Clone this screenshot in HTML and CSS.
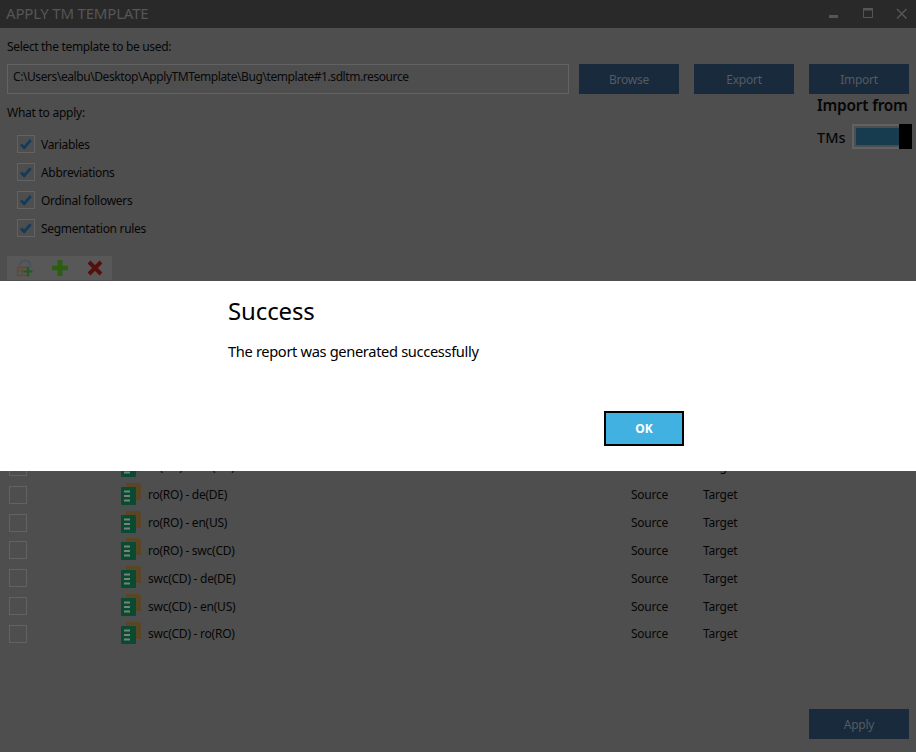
FILE: index.html
```html
<!DOCTYPE html>
<html lang="en">
<head>
<meta charset="utf-8">
<title>Apply TM Template</title>
<link rel="stylesheet" href="styles.css">
</head>
<body>
<div class="window">
  <header class="titlebar">
    <span class="title">APPLY TM TEMPLATE</span>
    <div class="winctl">
      <svg width="12" height="12" viewBox="0 0 12 12"><rect x="1" y="7" width="9" height="3" fill="#565656"/></svg>
      <svg width="12" height="12" viewBox="0 0 12 12"><path d="M1.500 0.500h9v9h-9z" fill="none" stroke="#565656"/><path d="M1 1.500h10" stroke="#565656" stroke-width="2"/></svg>
      <svg width="12" height="12" viewBox="0 0 12 12"><path d="M1 1l9.500 9.500M10.500 1l-9.500 9.500" stroke="#565656" stroke-width="1.500"/></svg>
    </div>
  </header>
  <main class="content">
    <div class="label first">Select the template to be used:</div>
    <div class="pathrow">
      <div class="pathinput">C:\Users\ealbu\Desktop\ApplyTMTemplate\Bug\template#1.sdltm.resource</div>
      <button class="btn">Browse</button>
      <button class="btn">Export</button>
      <button class="btn">Import</button>
    </div>
    <div class="options">
      <div class="optleft">
        <div class="label">What to apply:</div>
        <ul class="checks">
          <li><span class="check"><svg width="14" height="14" viewBox="0 0 14 14"><path d="M2 7.500l3.200 3.200 6.500-7.500" fill="none" stroke="#123c5e" stroke-width="2.800"/></svg></span>Variables</li>
          <li><span class="check"><svg width="14" height="14" viewBox="0 0 14 14"><path d="M2 7.500l3.200 3.200 6.500-7.500" fill="none" stroke="#123c5e" stroke-width="2.800"/></svg></span>Abbreviations</li>
          <li><span class="check"><svg width="14" height="14" viewBox="0 0 14 14"><path d="M2 7.500l3.200 3.200 6.500-7.500" fill="none" stroke="#123c5e" stroke-width="2.800"/></svg></span>Ordinal followers</li>
          <li><span class="check"><svg width="14" height="14" viewBox="0 0 14 14"><path d="M2 7.500l3.200 3.200 6.500-7.500" fill="none" stroke="#123c5e" stroke-width="2.800"/></svg></span>Segmentation rules</li>
        </ul>
      </div>
      <div class="importfrom">
        <div class="if-title">Import from</div>
        <div class="if-row">
          <span>TMs</span>
          <span class="toggle"><span class="toggle-fill"></span><span class="toggle-thumb"></span></span>
        </div>
      </div>
    </div>
    <div class="toolbar">
      <svg width="18" height="18" viewBox="0 0 18 18"><path d="M3.500 8V5.500C4.500 3 7 1.500 9.500 1.500S14 3 14.500 6v2" fill="none" stroke="#44525f" stroke-width="1.300"/><path d="M1.500 8.500h11v8h-11z" fill="none" stroke="#64492a" stroke-width="1.300"/><path d="M1.500 12h11M6 8.500v8" stroke="#64492a"/><path d="M12 8v9M7.500 12.500h9" stroke="#1f5a26" stroke-width="2.200"/></svg>
      <svg width="18" height="18" viewBox="0 0 18 18"><path d="M9 1v16M1 9h16" stroke="#2a5e10" stroke-width="4.600"/></svg>
      <svg width="18" height="18" viewBox="0 0 18 18"><path d="M3 3l12 12M15 3L3 15" stroke="#560f0f" stroke-width="4"/></svg>
    </div>
    <div class="rows">
      <div class="row"><span class="box"></span><svg class="ticon" viewBox="0 0 20 22"><use href="#tm"/></svg><span class="pair">ro(RO) - swc(CD)</span><span class="src">Source</span><span>Target</span></div>
      <div class="row"><span class="box"></span><svg class="ticon" viewBox="0 0 20 22"><use href="#tm"/></svg><span class="pair">ro(RO) - de(DE)</span><span class="src">Source</span><span>Target</span></div>
      <div class="row"><span class="box"></span><svg class="ticon" viewBox="0 0 20 22"><use href="#tm"/></svg><span class="pair">ro(RO) - en(US)</span><span class="src">Source</span><span>Target</span></div>
      <div class="row"><span class="box"></span><svg class="ticon" viewBox="0 0 20 22"><use href="#tm"/></svg><span class="pair">ro(RO) - swc(CD)</span><span class="src">Source</span><span>Target</span></div>
      <div class="row"><span class="box"></span><svg class="ticon" viewBox="0 0 20 22"><use href="#tm"/></svg><span class="pair">swc(CD) - de(DE)</span><span class="src">Source</span><span>Target</span></div>
      <div class="row"><span class="box"></span><svg class="ticon" viewBox="0 0 20 22"><use href="#tm"/></svg><span class="pair">swc(CD) - en(US)</span><span class="src">Source</span><span>Target</span></div>
      <div class="row"><span class="box"></span><svg class="ticon" viewBox="0 0 20 22"><use href="#tm"/></svg><span class="pair">swc(CD) - ro(RO)</span><span class="src">Source</span><span>Target</span></div>
    </div>
    <footer class="footer"><button class="btn">Apply</button></footer>
  </main>
  <svg class="defs" width="0" height="0"><defs><g id="tm"><path d="M5 0h13a2 2 0 0 1 2 2v15h-5V4H5z" fill="#5a4625"/><rect x="0" y="4" width="15" height="18" rx="1" fill="#0a4a30"/><path d="M3 8.500h6M3 13h6M3 17.500h6" stroke="#76827b" stroke-width="2"/></g></defs></svg>
  <div class="dialog" role="dialog">
    <h1 class="d-title">Success</h1>
    <p class="d-msg">The report was generated successfully</p>
    <button class="ok">OK</button>
  </div>
</div>
</body>
</html>
```
FILE: styles.css
```css
* { box-sizing: border-box; }
html, body { margin: 0; height: 100%; }
body { font-family: "Noto Sans", "Open Sans", sans-serif; font-size: 12px; color: #060606; background: #4e4e4e; overflow: hidden; }
.window { position: relative; width: 916px; height: 752px; display: flex; flex-direction: column; background: #4e4e4e; }
.titlebar { height: 28px; flex: none; background: #292929; display: flex; align-items: center; justify-content: space-between; padding: 0 8px 0 6px; }
.title { font-size: 15px; color: #565656; letter-spacing: -0.2px; margin-top: -3px; }
.winctl { display: flex; gap: 22px; }
.content { flex: 1; display: flex; flex-direction: column; padding: 0 7px 13px; min-height: 0; }
.label { height: 18px; line-height: 18px; letter-spacing: -0.25px; }
.label.first { margin-top: 10px; letter-spacing: -0.33px; }
.pathrow { margin-top: 8px; display: flex; height: 30px; }
.pathinput { width: 562px; border: 1px solid #626262; padding-left: 5px; line-height: 24px; letter-spacing: -0.42px; color: #080808; }
.btn { width: 100px; height: 30px; border: 0; padding: 0; background: #182a3c; color: #565b60; font: inherit; letter-spacing: -0.25px; }
.pathrow .btn { margin-left: 15px; }
.pathrow .btn:first-of-type { margin-left: 10px; }
.options { display: flex; justify-content: space-between; height: 162px; }
.optleft .label { margin-top: 10px; }
.checks { list-style: none; margin: 13px 0 0; padding: 0 0 0 10px; display: flex; flex-direction: column; gap: 10px; }
.checks li { display: flex; align-items: center; height: 18px; letter-spacing: -0.3px; }
.check { width: 18px; height: 18px; border: 1px solid #626262; margin-right: 6px; display: flex; align-items: center; justify-content: center; }
.importfrom { width: 96px; margin-top: 2px; margin-right: -4px; font-size: 15.4px; font-weight: 600; color: #060606; }
.if-title { height: 20px; line-height: 20px; letter-spacing: -0.2px; white-space: nowrap; }
.if-row { display: flex; align-items: center; margin-top: 8px; gap: 6px; font-size: 14.5px; font-weight: 500; }
.toggle { width: 60px; height: 25px; border: 2px solid #626262; border-right: 0; padding: 2px 0 2px 2px; display: flex; }
.toggle-fill { flex: 1; background: #173c50; }
.toggle-thumb { width: 13px; height: 25px; background: #000; margin: -4px 0; }
.toolbar { width: 105px; height: 24px; flex: none; background: #585858; display: flex; align-items: center; gap: 17px; padding-left: 9px; }
.rows { margin-top: 173px; flex: none; }
.row { height: 27.83px; display: flex; align-items: center; letter-spacing: -0.25px; }
.box { width: 18px; height: 18px; border: 1px solid #626262; margin-left: 2px; }
.ticon { width: 20px; height: 22px; margin-left: 94px; margin-top: -2px; }
.pair { width: 483px; margin-left: 7px; }
.src { width: 72px; }
.footer { margin-top: auto; display: flex; justify-content: flex-end; }
.defs { position: absolute; }
.dialog { position: absolute; left: 0; right: 0; top: 281px; height: 189.500px; background: #fff; padding-left: 228px; color: #000; }
.d-title { margin: 14px 0 0; font-size: 24px; font-weight: 400; line-height: 32px; letter-spacing: -0.12px; }
.d-msg { margin: 14px 0 0; font-size: 14.67px; line-height: 20px; letter-spacing: -0.35px; }
.ok { position: absolute; left: 604px; top: 130px; width: 80px; height: 35px; border: 2px solid #000; background: #41b1e1; color: #fff; font: 700 12px "Noto Sans", sans-serif; padding: 0; }
```
